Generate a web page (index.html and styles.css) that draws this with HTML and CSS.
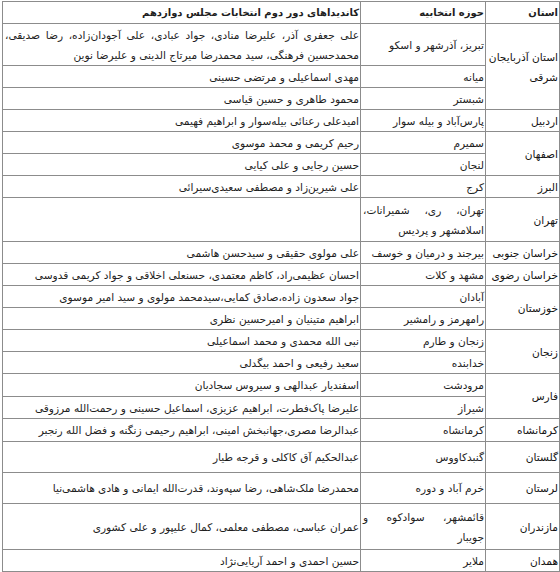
FILE: index.html
```html
<!DOCTYPE html>
<html lang="fa" dir="rtl">
<head>
<meta charset="utf-8">
<link rel="stylesheet" href="styles.css">
</head>
<body>
<table class="tbl">
  <colgroup>
    <col class="c-prov">
    <col class="c-dist">
    <col class="c-cand">
  </colgroup>
  <tr class="r hd">
    <th>استان</th>
    <th>حوزه انتخابیه</th>
    <th>کاندیداهای دور دوم انتخابات مجلس دوازدهم</th>
  </tr>
  <tr class="r r2">
    <td class="prov" rowspan="3">استان آذربایجان<br>شرقی</td>
    <td class="dist">تبریز، آذرشهر و اسکو</td>
    <td class="cand">علی جعفری آذر، علیرضا منادی، جواد عبادی، علی آجودان‌زاده، رضا صدیقی، محمدحسین فرهنگی، سید محمدرضا میرتاج الدینی و علیرضا نوین</td>
  </tr>
  <tr class="r">
    <td class="dist">میانه</td>
    <td class="cand">مهدی اسماعیلی و مرتضی حسینی</td>
  </tr>
  <tr class="r">
    <td class="dist">شبستر</td>
    <td class="cand">محمود طاهری و حسین قیاسی</td>
  </tr>
  <tr class="r">
    <td class="prov">اردبیل</td>
    <td class="dist">پارس‌آباد و بیله سوار</td>
    <td class="cand">امیدعلی رعنائی بیله‌سوار و ابراهیم فهیمی</td>
  </tr>
  <tr class="r">
    <td class="prov" rowspan="2">اصفهان</td>
    <td class="dist">سمیرم</td>
    <td class="cand">رحیم کریمی و محمد موسوی</td>
  </tr>
  <tr class="r">
    <td class="dist">لنجان</td>
    <td class="cand">حسین رجایی و علی کیایی</td>
  </tr>
  <tr class="r">
    <td class="prov">البرز</td>
    <td class="dist">کرج</td>
    <td class="cand">علی شیرین‌زاد و مصطفی سعیدی‌سیرائی</td>
  </tr>
  <tr class="r r2b">
    <td class="prov">تهران</td>
    <td class="dist">تهران، ری، شمیرانات، اسلامشهر و پردیس</td>
    <td class="cand"></td>
  </tr>
  <tr class="r">
    <td class="prov">خراسان جنوبی</td>
    <td class="dist nw">بیرجند و درمیان و خوسف</td>
    <td class="cand">علی مولوی حقیقی و سیدحسن هاشمی</td>
  </tr>
  <tr class="r">
    <td class="prov">خراسان رضوی</td>
    <td class="dist">مشهد و کلات</td>
    <td class="cand">احسان عظیمی‌راد، کاظم معتمدی، حسنعلی اخلاقی و جواد کریمی قدوسی</td>
  </tr>
  <tr class="r">
    <td class="prov" rowspan="2">خوزستان</td>
    <td class="dist">آبادان</td>
    <td class="cand">جواد سعدون زاده،صادق کمایی،سیدمحمد مولوی و سید امیر موسوی</td>
  </tr>
  <tr class="r">
    <td class="dist">رامهرمز و رامشیر</td>
    <td class="cand">ابراهیم متینیان و امیرحسین نظری</td>
  </tr>
  <tr class="r">
    <td class="prov" rowspan="2">زنجان</td>
    <td class="dist">زنجان و طارم</td>
    <td class="cand">نبی الله محمدی و محمد اسماعیلی</td>
  </tr>
  <tr class="r">
    <td class="dist">خدابنده</td>
    <td class="cand">سعید رفیعی و احمد بیگدلی</td>
  </tr>
  <tr class="r r23">
    <td class="prov" rowspan="2">فارس</td>
    <td class="dist">مرودشت</td>
    <td class="cand">اسفندیار عبدالهی و سیروس سجادیان</td>
  </tr>
  <tr class="r">
    <td class="dist">شیراز</td>
    <td class="cand">علیرضا پاک‌فطرت، ابراهیم عزیزی، اسماعیل حسینی و رحمت‌الله مرزوقی</td>
  </tr>
  <tr class="r r23">
    <td class="prov">کرمانشاه</td>
    <td class="dist">کرمانشاه</td>
    <td class="cand">عبدالرضا مصری،جهانبخش امینی، ابراهیم رحیمی زنگنه و فضل الله رنجبر</td>
  </tr>
  <tr class="r r31">
    <td class="prov">گلستان</td>
    <td class="dist low">گنبدکاووس</td>
    <td class="cand top">عبدالحکیم آق کاکلی و قرجه طیار</td>
  </tr>
  <tr class="r r31">
    <td class="prov">لرستان</td>
    <td class="dist">خرم آباد و دوره</td>
    <td class="cand">محمدرضا ملک‌شاهی، رضا سپه‌وند، قدرت‌الله ایمانی و هادی هاشمی‌نیا</td>
  </tr>
  <tr class="r r2c">
    <td class="prov">مازندران</td>
    <td class="dist wide">قائمشهر، سوادکوه و جویبار</td>
    <td class="cand">عمران عباسی، مصطفی معلمی، کمال علیپور و علی کشوری</td>
  </tr>
  <tr class="r">
    <td class="prov">همدان</td>
    <td class="dist">ملایر</td>
    <td class="cand">حسین احمدی و احمد آریایی‌نژاد</td>
  </tr>
</table>
</body>
</html>
```
FILE: styles.css
```css
html, body {
  margin: 0;
  padding: 0;
  background: #ffffff;
}

body {
  font-family: "DejaVu Sans", sans-serif;
  color: #1e1e1e;
}

.tbl {
  direction: rtl;
  border-collapse: collapse;
  table-layout: fixed;
  width: 557px;
  margin: 1px 0 0 1px;
  font-size: 10.6px;
}

.c-prov { width: 74px; }
.c-dist { width: 125px; }
.c-cand { width: 358px; }

.tbl th,
.tbl td {
  border: 1px solid #8c8c8c;
  padding: 0 1px 0 2px;
  line-height: 20px;
  text-align: justify;
  text-align-last: right;
  vertical-align: middle;
  font-weight: normal;
}

.tbl th {
  font-weight: bold;
  font-size: 10px;
  text-align: right;
}

.r { height: 22px; }
.r2 { height: 42px; }
.r2b { height: 44px; }
.r2c { height: 46px; }
.r23 { height: 23px; }
.r31 { height: 31px; }

.prov {
  font-weight: bold;
  color: #141414;
  white-space: nowrap;
}

.nw { white-space: nowrap; }

.wide { word-spacing: 9px; }

.top { vertical-align: top; padding-top: 3px; }
.low { vertical-align: bottom; padding-bottom: 2px; }
```
